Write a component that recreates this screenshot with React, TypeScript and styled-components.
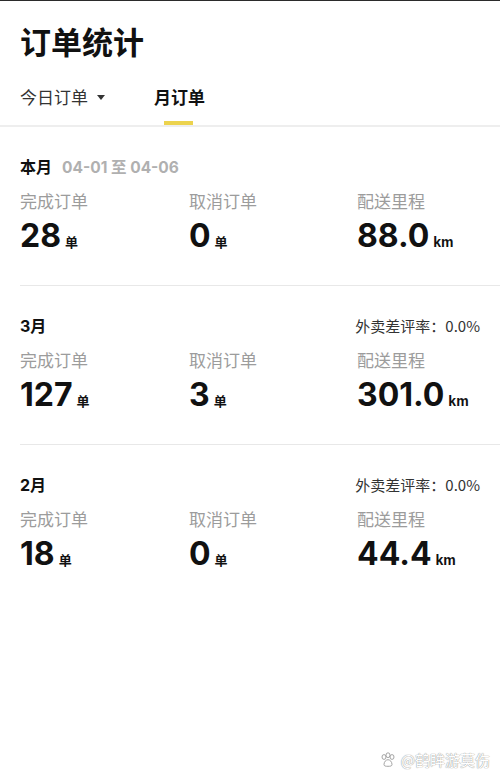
import * as React from 'react'
import styled, { createGlobalStyle } from 'styled-components'

const GlobalStyle = createGlobalStyle`
  html, body {
    margin: 0;
    padding: 0;
    background: #fff;
  }
  body {
    font-family: "Noto Sans CJK SC", "Liberation Sans", sans-serif;
    color: #111;
  }
`

const Page = styled.div`
  position: relative;
  width: 500px;
  height: 782px;
  overflow: hidden;
  background: #fff;
  border-top: 1px solid #2b2b2b;
  box-sizing: border-box;
`

const Title = styled.h1`
  margin: 0;
  padding: 20px 20px 0;
  font-size: 31px;
  line-height: 40px;
  font-weight: 700;
  color: #111;
`

const Tabs = styled.div`
  display: flex;
  align-items: flex-end;
  margin-top: 12px;
  padding: 0 20px;
  border-bottom: 2px solid #eeeeee;
`

const Tab = styled.div<{ $active?: boolean }>`
  position: relative;
  display: flex;
  align-items: center;
  padding: 12px 0 16px;
  margin-right: 49px;
  font-size: 17px;
  line-height: 24px;
  font-weight: ${(p) => (p.$active ? 700 : 400)};
  color: ${(p) => (p.$active ? '#111' : '#333')};

  &::after {
    content: '';
    display: ${(p) => (p.$active ? 'block' : 'none')};
    position: absolute;
    left: 50%;
    bottom: 0;
    width: 29px;
    height: 4px;
    margin-left: -16px;
    background: #ecd34e;
  }
`

const Caret = styled.span`
  display: inline-block;
  margin-left: 9px;
  width: 0;
  height: 0;
  border-left: 4px solid transparent;
  border-right: 4px solid transparent;
  border-top: 5px solid #333;
`

const Section = styled.section`
  margin-left: 20px;
  padding: 28px 20px 31px 0;
  border-bottom: 1px solid #e8e8e8;

  &:last-of-type {
    border-bottom: none;
  }
`

const SectionHead = styled.div`
  display: flex;
  align-items: center;
  justify-content: space-between;
  height: 22px;
`

const Period = styled.div`
  display: flex;
  align-items: center;
  font-family: "Inter", "Noto Sans CJK SC", sans-serif;
  font-size: 16px;
  font-weight: 700;
  color: #111;
`

const Range = styled.span`
  margin-left: 10px;
  font-size: 15.5px;
  font-weight: 700;
  color: #b0b0b0;
`

const Rate = styled.div`
  font-size: 15px;
  color: #333;
`

const Stats = styled.div`
  display: grid;
  grid-template-columns: 169px 168px 1fr;
  margin-top: 12px;
`

const Label = styled.div`
  font-size: 17px;
  line-height: 24px;
  color: #9c9c9c;
`

const Value = styled.div`
  display: flex;
  align-items: baseline;
  margin-top: 5px;
  height: 36px;
  font-family: "Inter", "Noto Sans CJK SC", sans-serif;
  font-size: 32px;
  line-height: 36px;
  font-weight: 700;
  color: #111;
`

const Unit = styled.span<{ $latin?: boolean }>`
  margin-left: 4px;
  font-family: ${(p) => (p.$latin ? '"Liberation Sans", sans-serif' : '"Noto Sans CJK SC", sans-serif')};
  font-size: ${(p) => (p.$latin ? '14px' : '13px')};
  font-weight: 700;
  color: #111;
`

const Watermark = styled.div`
  position: absolute;
  right: 10px;
  bottom: 12px;
  display: flex;
  align-items: center;
  gap: 5px;
  font-size: 15px;
  color: #fff;
  text-shadow: 0 0 1px #9a9a9a, 0 0 1px #9a9a9a;
`

type Stat = { label: string; value: string; unit: string }

type Month = {
  period: string
  range?: string
  rate?: string
  stats: Stat[]
}

const months: Month[] = [
  {
    period: '本月',
    range: '04-01 至 04-06',
    stats: [
      { label: '完成订单', value: '28', unit: '单' },
      { label: '取消订单', value: '0', unit: '单' },
      { label: '配送里程', value: '88.0', unit: 'km' },
    ],
  },
  {
    period: '3月',
    rate: '0.0%',
    stats: [
      { label: '完成订单', value: '127', unit: '单' },
      { label: '取消订单', value: '3', unit: '单' },
      { label: '配送里程', value: '301.0', unit: 'km' },
    ],
  },
  {
    period: '2月',
    rate: '0.0%',
    stats: [
      { label: '完成订单', value: '18', unit: '单' },
      { label: '取消订单', value: '0', unit: '单' },
      { label: '配送里程', value: '44.4', unit: 'km' },
    ],
  },
]

const Paw: React.FC = () => (
  <svg width="16" height="16" viewBox="0 0 16 16" fill="#fff" stroke="#9a9a9a" strokeWidth="0.9">
    <ellipse cx="4" cy="5" rx="2" ry="2.4" />
    <ellipse cx="8" cy="3.2" rx="2" ry="2.4" />
    <ellipse cx="12" cy="5" rx="2" ry="2.4" />
    <path d="M4 12.5c0-2.6 1.9-4.8 4-4.8s4 2.2 4 4.8c0 1.6-1.6 1.8-4 1.8s-4-.2-4-1.8z" />
  </svg>
)

export default function App() {
  return (
    <>
      <GlobalStyle />
      <Page>
        <Title>订单统计</Title>
        <Tabs>
          <Tab>
            今日订单
            <Caret />
          </Tab>
          <Tab $active>月订单</Tab>
        </Tabs>
        {months.map((m) => (
          <Section key={m.period}>
            <SectionHead>
              <Period>
                {m.period}
                {m.range && <Range>{m.range}</Range>}
              </Period>
              {m.rate && <Rate>外卖差评率：{m.rate}</Rate>}
            </SectionHead>
            <Stats>
              {m.stats.map((s) => (
                <div key={s.label}>
                  <Label>{s.label}</Label>
                  <Value>
                    {s.value}
                    <Unit $latin={s.unit === 'km'}>{s.unit}</Unit>
                  </Value>
                </div>
              ))}
            </Stats>
          </Section>
        ))}
        <Watermark>
          <Paw />
          @鹤眸游莫伤
        </Watermark>
      </Page>
    </>
  )
}
